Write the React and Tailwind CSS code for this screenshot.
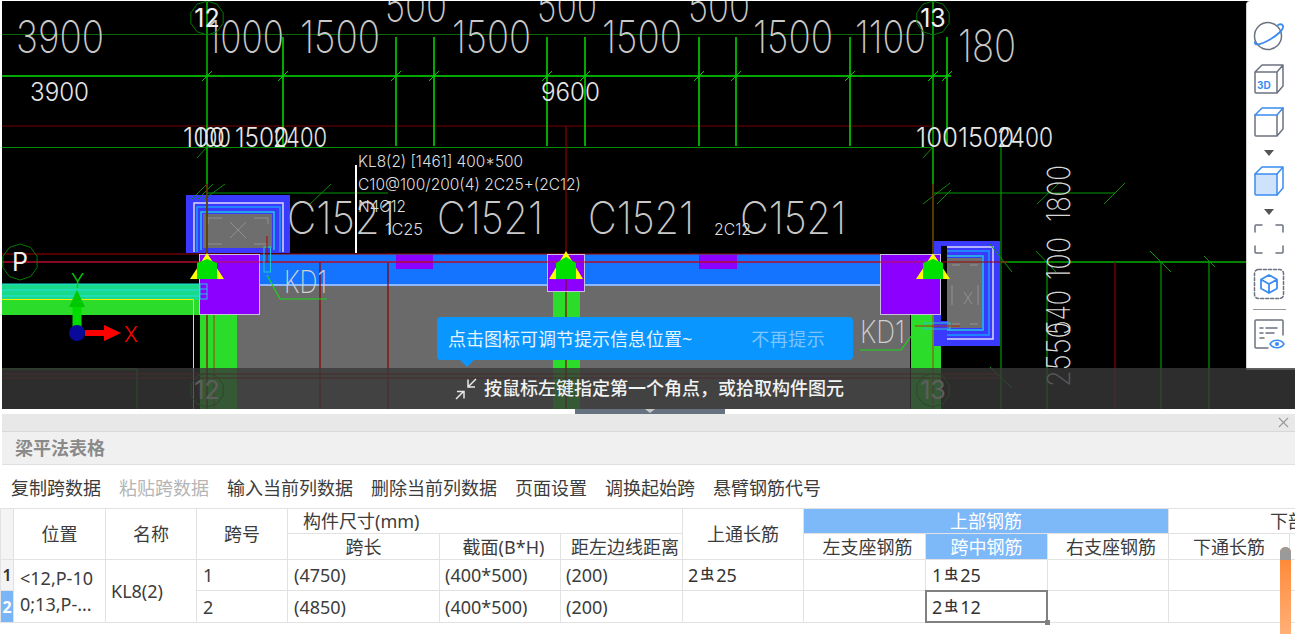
import React from "react";
import { X } from "lucide-react";

const cjk = "font-['Noto_Sans','Noto_Sans_CJK_SC',sans-serif]";
const cadFont = "Inter, Roboto, 'Liberation Sans', sans-serif";

const vLines = [283, 396, 434, 547, 585, 699, 736, 850, 947];
const ticksTop = [207, 283, 396, 434, 547, 585, 699, 736, 850, 933, 947];

const bigLabels = [
  ["3900", 16, 53, 88],
  ["1000", 207, 53, 77],
  ["1500", 300, 53, 80],
  ["500", 385, 22, 62],
  ["1500", 452, 53, 79],
  ["500", 537, 22, 60],
  ["1500", 602, 53, 80],
  ["500", 688, 22, 62],
  ["1500", 753, 53, 80],
  ["1100", 855, 53, 71],
  ["180", 958, 62, 58],
];

const midLabels = [
  ["3900", 30, 101, 59, 26],
  ["9600", 541, 101, 59, 26],
  ["100", 183, 147, 42, 27],
  ["100", 195, 147, 36, 27],
  ["1500", 235, 147, 54, 27],
  ["2400", 273, 147, 54, 27],
  ["100", 916, 147, 42, 27],
  ["1500", 958, 147, 56, 27],
  ["2400", 997, 147, 56, 27],
];

const columnLabels = [
  [287, 108],
  [437, 106],
  [588, 106],
  [740, 106],
];

function AxisBubble({ cx, cy, label, r = 17, dim }) {
  const pts = Array.from({ length: 10 }, (_, i) => {
    const a = (Math.PI / 5) * i + Math.PI / 10;
    return `${cx + r * Math.cos(a)},${cy + r * Math.sin(a)}`;
  }).join(" ");
  return (
    <g>
      <polygon points={pts} fill="none" stroke={dim ? "#2f6b2f" : "#007a00"} strokeWidth="1" />
      <text x={cx} y={cy + 9} textAnchor="middle" fontSize="25" fontFamily={cadFont} fill={dim ? "#8a8a8a" : "#f0f0f0"}>
        {label}
      </text>
    </g>
  );
}

function CadDrawing() {
  return (
    <svg width="1293" height="408" viewBox="2 1 1293 408" className="block">
      <rect x="2" y="1" width="1293" height="408" fill="#000" />

      {/* slab, beam and columns */}
      <rect x="237" y="286" width="673" height="123" fill="#6a6a6a" />
      <rect x="200" y="315" width="37" height="94" fill="#2bdc2b" />
      <rect x="553" y="291" width="27" height="118" fill="#2bdc2b" />
      <rect x="911" y="315" width="30" height="94" fill="#2bdc2b" />
      <rect x="2" y="300" width="198" height="15" fill="#2bdc2b" />
      <rect x="2" y="284" width="198" height="16" fill="#19d98a" />
      <path d="M2 284H200M2 290H200M2 296H200" stroke="#22e0e0" strokeWidth="1" />
      <path d="M2 299.5H193.5V409" fill="none" stroke="#f0f000" strokeWidth="1" />
      <rect x="260" y="254" width="620" height="31" fill="#1474ff" />
      <rect x="260" y="284" width="620" height="2" fill="#8db8ff" />
      <rect x="396" y="255" width="37" height="14" fill="#8b00ff" />
      <rect x="699" y="255" width="38" height="14" fill="#8b00ff" />

      {/* left corner column */}
      <rect x="186" y="195" width="104" height="58" fill="#3a3aff" />
      <path d="M194 252V203H283V252" fill="none" stroke="#d9d9ff" strokeWidth="1.5" />
      <path d="M197 252V207H280V252" fill="none" stroke="#1d9bff" strokeWidth="1.5" />
      <path d="M201 250V212H274V250" fill="none" stroke="#22c8e0" strokeWidth="1.5" />
      <rect x="203" y="214" width="69" height="34" fill="#6e6e6e" />
      <path d="M208 218H222M254 218H268M208 218V224M268 218V224M230 222L246 238M246 222L230 238M208 244H222M254 244H268" stroke="#8f8f8f" strokeWidth="1" />

      {/* right corner column */}
      <rect x="934" y="241" width="66" height="105" fill="#3a3aff" />
      <rect x="941" y="246" width="6" height="75" fill="#000" />
      <path d="M947 247H993V339H947" fill="none" stroke="#d9d9ff" strokeWidth="1.5" />
      <path d="M947 251H989V335H947" fill="none" stroke="#1d9bff" strokeWidth="1.5" />
      <path d="M947 256H983V330H947" fill="none" stroke="#22c8e0" strokeWidth="1.5" />
      <rect x="947" y="258" width="35" height="70" fill="#6e6e6e" />
      <path d="M952 265H960M978 265H970M964 292L972 304M972 292L964 304M952 285V305M978 285V305M952 324H960M978 324H970" stroke="#929292" strokeWidth="1" />

      {/* dark green and red grid */}
      <path d="M2 34.5H925" stroke="#0a6a0a" strokeWidth="1" />
      <path d="M2 76H951" stroke="#00e000" strokeWidth="1.5" />
      <path d="M2 126H933" stroke="#7a0000" strokeWidth="1" />
      <path d="M2 147.5H933" stroke="#009000" strokeWidth="1.2" />
      <path d="M207 2V253M933 2V253" stroke="#00c000" strokeWidth="1.5" />
      {vLines.map((x) => (
        <path key={x} d={`M${x} 37V146`} stroke="#00e000" strokeWidth="1.5" />
      ))}
      {ticksTop.map((x) => (
        <path key={x} d={`M${x - 5} 81L${x + 5} 71`} stroke="#00c800" strokeWidth="1" />
      ))}
      <path d="M197 158L207 147M923 158L933 147M191 200L207 184M197 200L213 184M203 200L225 184M310 204L331 184M923 204L950 183M937 204L951 190M1037 204L1058 184M1104 204L1125 183" stroke="#0a8a0a" strokeWidth="1" />
      <path d="M207 193H388M933 193H1115M1001 147V409M1047 262V409M1161 262V409M1209 262V409" stroke="#009a00" strokeWidth="1.2" />
      <path d="M1001 262H1246" stroke="#00b000" strokeWidth="1.5" />
      <path d="M990 244L1012 272M1036 251L1056 272M1150 251L1171 272M1204 256L1215 267M990 367L1012 388" stroke="#009a00" strokeWidth="1" />
      <path d="M2 369H137V409" fill="none" stroke="#0a8a0a" strokeWidth="1" />
      <path d="M2 374H1000M2 378H1000" stroke="#8a0000" strokeWidth="1" />
      <path d="M566 126V409M933 184V253M207 184V409M1115 262V409M320 262V409M388 262V409" stroke="#8a0000" strokeWidth="1.2" />
      <path d="M2 254H880M2 262H1008" stroke="#a00000" strokeWidth="1.2" />
      <path d="M933 315V409M214 280V409" stroke="#a04010" strokeWidth="1" />

      {/* purple column heads */}
      <rect x="199.5" y="254.5" width="60" height="60" fill="#8b00ff" stroke="#c8c0d8" strokeWidth="1" />
      <rect x="547.5" y="254.5" width="37" height="37" fill="#8b00ff" stroke="#c8c0d8" strokeWidth="1" />
      <rect x="880.5" y="254.5" width="60" height="60" fill="#8b00ff" stroke="#c8c0d8" strokeWidth="1" />
      <path d="M2 262H933" stroke="#c01040" strokeWidth="1" />
      <path d="M566 254V291" stroke="#8a0000" strokeWidth="1" />

      {[[207, 253, 279], [566, 251, 279], [933, 253, 279]].map(([x, top, base]) => (
        <g key={x}>
          <polygon points={`${x},${top} ${x - 17},${base} ${x + 17},${base}`} fill="#ffff00" />
          <polygon points={`${x - 10},${base} ${x - 10},${base - 16} ${x},${top + 6} ${x + 10},${base - 16} ${x + 10},${base}`} fill="#00e000" />
        </g>
      ))}

      {/* rebar details */}
      <rect x="264" y="247" width="6.5" height="25" fill="none" stroke="#20c8c8" strokeWidth="1" />
      <path d="M267 236V262" stroke="#b00000" strokeWidth="1" />
      <rect x="200" y="284" width="7" height="15" fill="none" stroke="#20c8e0" strokeWidth="1" />
      <path d="M200 289H207M200 294H207" stroke="#20c8e0" strokeWidth="1" />
      <rect x="924" y="323" width="26" height="6" fill="none" stroke="#20c8c8" strokeWidth="1" />
      <path d="M915 326H960" stroke="#b03010" strokeWidth="1.2" />
      <path d="M267 275L280 299H327M860 350H901L912 335" fill="none" stroke="#18d818" strokeWidth="1.2" />

      {/* labels */}
      {bigLabels.map(([t, x, y, w]) => (
        <text key={`${t}${x}`} x={x} y={y} fontSize="45" fontWeight="200" fontFamily={cadFont} fill="#c8c8c8" textLength={w} lengthAdjust="spacingAndGlyphs">
          {t}
        </text>
      ))}
      {midLabels.map(([t, x, y, w, s]) => (
        <text key={`${t}${x}`} x={x} y={y} fontSize={s} fontWeight="300" fontFamily={cadFont} fill="#e6e6e6" textLength={w} lengthAdjust="spacingAndGlyphs">
          {t}
        </text>
      ))}
      {columnLabels.map(([x, w]) => (
        <text key={x} x={x} y={234} fontSize="45" fontWeight="200" fontFamily={cadFont} fill="#c8c8c8" textLength={w} lengthAdjust="spacingAndGlyphs">
          C1521
        </text>
      ))}
      <text x="284" y="293" fontSize="31" fontWeight="200" fontFamily={cadFont} fill="#d0d0d0" textLength="43" lengthAdjust="spacingAndGlyphs">KD1</text>
      <text x="860" y="343" fontSize="31" fontWeight="200" fontFamily={cadFont} fill="#d0d0d0" textLength="45" lengthAdjust="spacingAndGlyphs">KD1</text>

      <path d="M356 165V253" stroke="#fff" strokeWidth="2" />
      <text x="358" y="167" fontSize="16" fontWeight="300" fontFamily={cadFont} fill="#ddd" textLength="165" lengthAdjust="spacingAndGlyphs">KL8(2) [1461] 400*500</text>
      <text x="358" y="190" fontSize="16" fontWeight="300" fontFamily={cadFont} fill="#ddd" textLength="223" lengthAdjust="spacingAndGlyphs">C10@100/200(4) 2C25+(2C12)</text>
      <text x="358" y="212" fontSize="16" fontWeight="300" fontFamily={cadFont} fill="#ddd" textLength="48" lengthAdjust="spacingAndGlyphs">N4C12</text>
      <text x="385" y="235" fontSize="16" fontWeight="300" fontFamily={cadFont} fill="#ddd" textLength="38" lengthAdjust="spacingAndGlyphs">1C25</text>
      <text x="714" y="235" fontSize="16" fontWeight="300" fontFamily={cadFont} fill="#ddd" textLength="37" lengthAdjust="spacingAndGlyphs">2C12</text>

      {[
        ["1800", 222, 57],
        ["100", 280, 43],
        ["540", 335, 45],
        ["2550", 387, 65],
      ].map(([t, y, w]) => (
        <text key={t} transform={`translate(1070 ${y}) rotate(-90)`} fontSize="32" fontWeight="200" fontFamily={cadFont} fill="#d8d8d8" textLength={w} lengthAdjust="spacingAndGlyphs">
          {t}
        </text>
      ))}

      <AxisBubble cx={207} cy={18} label="12" />
      <AxisBubble cx={933} cy={18} label="13" />
      <AxisBubble cx={20} cy={262} r={18} label="P" />
      <AxisBubble cx={207} cy={390} label="12" />
      <AxisBubble cx={933} cy={390} label="13" />

      {/* ucs icon */}
      <path d="M77 328V305" stroke="#00dc00" strokeWidth="9" />
      <polygon points="77,290 69,307 85,307" fill="#00c800" />
      <path d="M85 333H105" stroke="#ff0000" strokeWidth="6" />
      <polygon points="121,333 104,325 104,341" fill="#ff0000" />
      <circle cx="77" cy="333" r="8" fill="#0a0a9a" />
      <text x="71" y="288" fontSize="20" fontFamily={cadFont} fontWeight="300" fill="#00d000">Y</text>
      <text x="124" y="342" fontSize="21" fontFamily={cadFont} fontWeight="300" fill="#ff0000">X</text>
    </svg>
  );
}

function ToolIcon({ children, className = "" }) {
  return (
    <svg width="32" height="32" viewBox="0 0 32 32" fill="none" strokeWidth="1.5" strokeLinejoin="round" strokeLinecap="round" className={className}>
      {children}
    </svg>
  );
}

const cubeGray = "#6b7280";
const cubeBlue = "#3b8cf0";

function SideToolbar() {
  return (
    <div className="absolute right-0 top-px h-[369px] w-[49px] bg-white border-l border-b border-[#d0d0d0] rounded-tl flex flex-col items-center pt-[19px] pr-[4px]">
      <ToolIcon>
        <circle cx="15" cy="16" r="13.5" stroke={cubeGray} />
        <path d="M2 22C1 26 7 25 16 20C25 15 31 9 30 6C29 4 27 4 25 5" stroke={cubeBlue} strokeWidth="1.8" />
      </ToolIcon>
      <ToolIcon className="mt-[11px]">
        <path d="M2 9V29a1 1 0 0 0 1 1H24V9ZM2 9L9 2H30V23L24 30M24 9L30 2" stroke={cubeGray} />
        <text x="4" y="26" fontSize="10" fontWeight="700" fontFamily="Inter, sans-serif" fill={cubeBlue} stroke="none">3D</text>
      </ToolIcon>
      <ToolIcon className="mt-[11px]">
        <path d="M2 9V29a1 1 0 0 0 1 1H24V9M24 30L30 23V2" stroke={cubeGray} />
        <path d="M2 9L9 2H30L24 9Z" stroke={cubeBlue} />
      </ToolIcon>
      <div className="mt-[12px] h-0 w-0 border-x-[5px] border-t-[6px] border-x-transparent border-t-[#555]" />
      <ToolIcon className="mt-[9px]">
        <path d="M2 9V29a1 1 0 0 0 1 1H24V9Z" fill="#cfe2fb" stroke={cubeBlue} />
        <path d="M2 9L9 2H30V23L24 30M24 9L30 2" stroke={cubeBlue} />
      </ToolIcon>
      <div className="mt-[12px] h-0 w-0 border-x-[5px] border-t-[6px] border-x-transparent border-t-[#555]" />
      <ToolIcon className="mt-[8px]">
        <path d="M2 9V3a1 1 0 0 1 1-1H9M23 2H29a1 1 0 0 1 1 1V9M30 23V29a1 1 0 0 1-1 1H23M9 30H3a1 1 0 0 1-1-1V23" stroke={cubeGray} />
      </ToolIcon>
      <ToolIcon className="mt-[13px]">
        <rect x="1.5" y="1.5" width="29" height="29" rx="4" stroke={cubeGray} strokeDasharray="3 2" />
        <path d="M16 7L24 11.5V20.5L16 25L8 20.5V11.5ZM8 11.5L16 16L24 11.5M16 16V25" stroke={cubeBlue} strokeWidth="1.8" />
      </ToolIcon>
      <div className="mt-[9px] h-px w-[33px] bg-[#999]" />
      <ToolIcon className="mt-[8px]">
        <path d="M15 30H3a1 1 0 0 1-1-1V3a1 1 0 0 1 1-1H29a1 1 0 0 1 1 1V17" stroke={cubeGray} />
        <path d="M7 10H10M13 10H24M7 15H10M13 15H21M7 20H11" stroke={cubeGray} />
        <path d="M17 26C20 21 28 21 31 26C28 31 20 31 17 26Z" stroke={cubeBlue} fill="#fff" />
        <circle cx="24" cy="26" r="2" fill={cubeBlue} stroke="none" />
      </ToolIcon>
    </div>
  );
}

function Rebar({ n, d }) {
  return (
    <span className="text-[18px] text-[#333]">
      {n}
      <span className="relative -top-[3px] mx-[2px] text-[14px] font-medium">虫</span>
      {d}
    </span>
  );
}

const th = "bg-white flex items-center justify-center text-[18px] leading-none text-[#3c3c3c]";
const td = "bg-white flex items-center pl-[6px] text-[18px] leading-none text-[#3c3c3c]";

function BeamTable() {
  return (
    <div className={`relative grid w-[1400px] gap-px bg-[#e2e2e2] p-px grid-cols-[12px_91px_90px_90px_151px_120px_121px_120px_121px_121px_120px_120px_120px] grid-rows-[24px_25px_30px_31px] ${cjk}`}>
      <div className="row-span-2 bg-[#f4f4f4]" />
      <div className={`${th} row-span-2`}>位置</div>
      <div className={`${th} row-span-2`}>名称</div>
      <div className={`${th} row-span-2`}>跨号</div>
      <div className={`${th} col-span-3 justify-start pl-[15px]`}>构件尺寸(mm)</div>
      <div className={`${th} row-span-2`}>上通长筋</div>
      <div className={`${th} col-span-3 !bg-[#7db8f8] text-white`}>上部钢筋</div>
      <div className={`${th} col-span-2 justify-start pl-[101px]`}>下部钢筋</div>

      <div className={th}>跨长</div>
      <div className={`${th} pl-[7px]`}>截面(B*H)</div>
      <div className={`${th} pl-[7px]`}>距左边线距离</div>
      <div className={`${th} pl-[6px]`}>左支座钢筋</div>
      <div className={`${th} !bg-[#7db8f8] text-white`}>跨中钢筋</div>
      <div className={`${th} pl-[6px]`}>右支座钢筋</div>
      <div className={th}>下通长筋</div>
      <div className="bg-white" />

      <div className="bg-[#f4f4f4] flex items-center justify-center text-[16px] font-semibold text-[#333]">1</div>
      <div className="row-span-2 bg-white flex items-center pl-[6px] text-[18px] leading-[26px] text-[#3c3c3c] whitespace-nowrap">
        <span>
          &lt;12,P-10
          <br />
          0;13,P-...
        </span>
      </div>
      <div className={`${td} row-span-2 !pl-[5px]`}>KL8(2)</div>
      <div className={td}>1</div>
      <div className={td}>(4750)</div>
      <div className={`${td} !pl-[5px]`}>(400*500)</div>
      <div className={`${td} !pl-[5px]`}>(200)</div>
      <div className={`${td} !pl-[5px]`}><Rebar n="2" d="25" /></div>
      <div className={td} />
      <div className={td}><Rebar n="1" d="25" /></div>
      <div className={td} />
      <div className={td} />
      <div className={td} />

      <div className="bg-[#79b5f7] flex items-center justify-center text-[16px] font-bold text-white">2</div>
      <div className={td}>2</div>
      <div className={td}>(4850)</div>
      <div className={`${td} !pl-[5px]`}>(400*500)</div>
      <div className={`${td} !pl-[5px]`}>(200)</div>
      <div className={td} />
      <div className={td} />
      <div className={`${td} relative outline-2 -outline-offset-1 outline-[#808080]`}>
        <Rebar n="2" d="12" />
        <span className="absolute -bottom-[3px] -right-[3px] h-[5px] w-[5px] bg-[#808080]" />
      </div>
      <div className={td} />
      <div className={td} />
      <div className={td} />
    </div>
  );
}

const tools = [
  ["复制跨数据", false],
  ["粘贴跨数据", true],
  ["输入当前列数据", false],
  ["删除当前列数据", false],
  ["页面设置", false],
  ["调换起始跨", false],
  ["悬臂钢筋代号", false],
];

export default function App() {
  return (
    <div className={`relative h-[634px] w-[1295px] overflow-hidden bg-white ${cjk}`}>
      {/* cad viewport */}
      <div className="relative h-[409px] pl-[2px] pt-px">
        <CadDrawing />
        <SideToolbar />

        <div className="absolute bottom-0 left-[2px] right-0 flex h-[41px] items-center bg-[#383838]/80 pl-[451px]">
          <svg width="26" height="26" viewBox="0 0 26 26" fill="none" stroke="#e8e8e8" strokeWidth="1.5">
            <path d="M3 23L11 15M4 15.5H11V22.5M23 3L15 11M15 3.5V11H22" />
          </svg>
          <span className="ml-[5px] -mt-[2px] text-[18px] font-medium leading-none text-[#f2f2f2]">
            按鼠标左键指定第一个角点，或拾取构件图元
          </span>
        </div>

        <div className="absolute left-[437px] top-[317px] flex h-[43px] w-[416px] items-center rounded bg-[#0a96ff] pl-[11px] text-[18px] leading-none text-[#e4f3ff]">
          <span>点击图标可调节提示信息位置~</span>
          <span className="ml-[59px] tracking-[0.5px] text-[#7cc4ff]">不再提示</span>
          <div className="absolute -bottom-[7px] left-[23px] h-0 w-0 border-x-[7px] border-t-[7px] border-x-transparent border-t-[#0a96ff]" />
        </div>
      </div>

      {/* splitter handle */}
      <div className="ml-[575px] flex h-[5px] w-[150px] justify-center bg-[#667280]">
        <div className="h-0 w-0 border-x-[5px] border-t-[4px] border-x-transparent border-t-[#c8c8c8]" />
      </div>

      {/* bottom panel */}
      <div className="ml-[2px]">
        <div className="flex h-[18px] items-center justify-end border-b border-[#d8d8d8] bg-[#e8e8e8] pr-[3px]">
          <X size={17} strokeWidth={1.5} className="text-[#999]" />
        </div>
        <div className="flex h-[33px] items-center border-b border-[#e0e0e0] bg-[#f0f0f0] pl-[13px] text-[18px] font-bold leading-none text-[#8a8a8a]">
          梁平法表格
        </div>
        <div className="flex h-[43px] items-center gap-[18px] pl-[9px] pt-[2px] text-[18px] leading-none">
          {tools.map(([label, off]) => (
            <span key={label} className={off ? "text-[#b5b5b5]" : "text-[#3c3c3c]"}>
              {label}
            </span>
          ))}
        </div>
      </div>
      <BeamTable />

      {/* orange scroll thumb */}
      <div className="absolute left-[1280px] top-[547px] h-[93px] w-[11px] overflow-hidden rounded-full bg-gradient-to-b from-[#ff8428] to-[#ffb27a]">
        <div className="h-[13px] bg-[#9a9a9a]" />
      </div>
    </div>
  );
}
